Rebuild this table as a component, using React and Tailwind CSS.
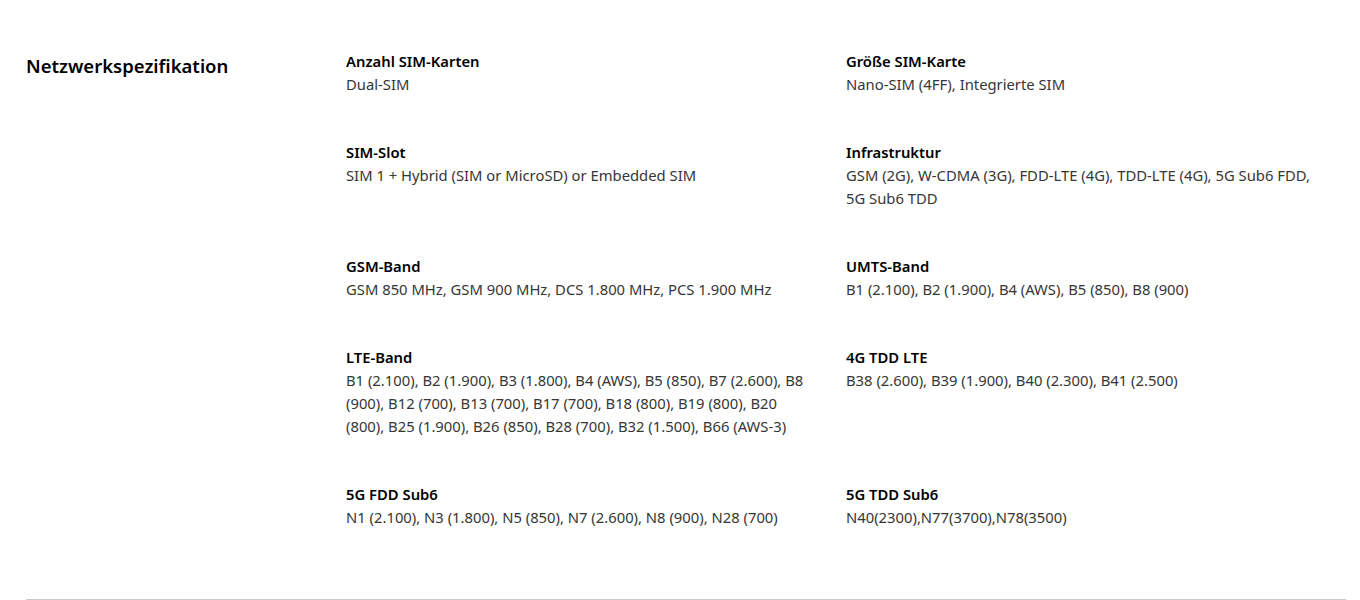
import React from "react";

const specs = [
  { label: "Anzahl SIM-Karten", value: "Dual-SIM" },
  { label: "Größe SIM-Karte", value: "Nano-SIM (4FF), Integrierte SIM" },
  { label: "SIM-Slot", value: "SIM 1 + Hybrid (SIM or MicroSD) or Embedded SIM" },
  {
    label: "Infrastruktur",
    value:
      "GSM (2G), W-CDMA (3G), FDD-LTE (4G), TDD-LTE (4G), 5G Sub6 FDD, 5G Sub6 TDD",
  },
  { label: "GSM-Band", value: "GSM 850 MHz, GSM 900 MHz, DCS 1.800 MHz, PCS 1.900 MHz" },
  { label: "UMTS-Band", value: "B1 (2.100), B2 (1.900), B4 (AWS), B5 (850), B8 (900)" },
  {
    label: "LTE-Band",
    value:
      "B1 (2.100), B2 (1.900), B3 (1.800), B4 (AWS), B5 (850), B7 (2.600), B8 (900), B12 (700), B13 (700), B17 (700), B18 (800), B19 (800), B20 (800), B25 (1.900), B26 (850), B28 (700), B32 (1.500), B66 (AWS-3)",
  },
  { label: "4G TDD LTE", value: "B38 (2.600), B39 (1.900), B40 (2.300), B41 (2.500)" },
  {
    label: "5G FDD Sub6",
    value: "N1 (2.100), N3 (1.800), N5 (850), N7 (2.600), N8 (900), N28 (700)",
  },
  { label: "5G TDD Sub6", value: "N40(2300),N77(3700),N78(3500)" },
];

export default function App() {
  return (
    <div className="bg-white min-h-[600px] font-['Noto_Sans','Open_Sans',sans-serif]">
      <div className="ml-[26px] mr-[14px] pt-[50px] border-b border-[#cccccc] flex">
        {/* Section title */}
        <div className="w-[320px] shrink-0 pt-[2px]">
          <h2 className="text-[18.5px] leading-[28px] font-semibold text-black">
            Netzwerkspezifikation
          </h2>
        </div>

        {/* Spec grid */}
        <div className="grid grid-cols-[466px_466px] gap-x-[34px] gap-y-[45px] pb-[70px]">
          {specs.map((spec) => (
            <div key={spec.label}>
              <p className="text-[14.8px] leading-[23px] font-semibold text-black">
                {spec.label}
              </p>
              <p className="text-[14.8px] leading-[23px] text-[#363636]">{spec.value}</p>
            </div>
          ))}
        </div>
      </div>
    </div>
  );
}
